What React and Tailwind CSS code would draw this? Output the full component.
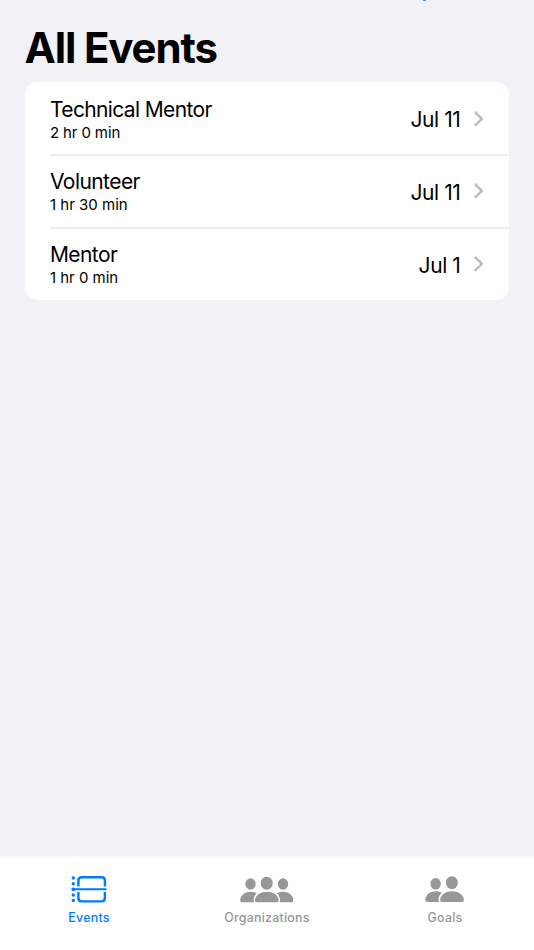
const events = [
  { title: "Technical Mentor", duration: "2 hr 0 min", date: "Jul 11", titleClass: "tracking-[-0.63px]", durationClass: "tracking-[-0.13px]" },
  { title: "Volunteer", duration: "1 hr 30 min", date: "Jul 11", titleClass: "tracking-[-0.56px]", durationClass: "tracking-[0px]" },
  { title: "Mentor", duration: "1 hr 0 min", date: "Jul 1", titleClass: "tracking-[-0.6px]", durationClass: "tracking-[-0.03px]" },
];

function Chevron() {
  return (
    <svg width="12" height="18" viewBox="0 0 12 18" fill="none" className="ml-[12px]">
      <path
        d="M2.4 2.5L8.9 8.8L2.4 15.1"
        stroke="#bdbdc0"
        strokeWidth="2.5"
        strokeLinecap="round"
        strokeLinejoin="round"
      />
    </svg>
  );
}

function EventsIcon() {
  return (
    <svg width="36" height="30" viewBox="0 0 36 30" fill="none" stroke="currentColor">
      <g fill="currentColor" stroke="none">
        <circle cx="2.3" cy="4" r="1.7" />
        <circle cx="2.3" cy="9.7" r="1.7" />
        <circle cx="2.3" cy="15.3" r="1.9" />
        <circle cx="2.3" cy="21" r="1.7" />
        <circle cx="2.3" cy="26.5" r="1.7" />
      </g>
      <path d="M7.4 12.6V6.6Q7.4 3.3 10.7 3.3H30.6Q33.9 3.3 33.9 6.6V12.6" strokeWidth="2.4" />
      <path d="M7.4 18V24.1Q7.4 27.4 10.7 27.4H30.6Q33.9 27.4 33.9 24.1V18" strokeWidth="2.4" />
      <path d="M2.3 15.3H34.7" strokeWidth="1.9" strokeLinecap="round" />
    </svg>
  );
}

function OrganizationsIcon() {
  return (
    <svg width="54" height="30" viewBox="0 0 54 30" fill="currentColor">
      <ellipse cx="10.5" cy="10" rx="5.2" ry="5.8" />
      <ellipse cx="43" cy="10" rx="5.2" ry="5.8" />
      <ellipse cx="26.7" cy="9.2" rx="6" ry="6.5" />
      <path d="M2 28.2Q0.2 28.2 0.2 26.3C0.2 22 4.2 17.8 10.7 17.8C13 17.8 15 18.4 16.7 19.3C14.6 21.2 13.6 23.6 13.6 26C13.6 26.9 13.8 27.6 14.3 28.2Z" />
      <path d="M51.6 28.2Q53.4 28.2 53.4 26.3C53.4 22 49.4 17.8 42.9 17.8C40.6 17.8 38.6 18.4 36.9 19.3C39 21.2 40 23.6 40 26C40 26.9 39.8 27.6 39.3 28.2Z" />
      <path d="M17 28.2Q14.9 28.2 14.9 26.3C14.9 22.4 19.2 17.7 26.8 17.7C34.4 17.7 38.7 22.4 38.7 26.3Q38.7 28.2 36.6 28.2Z" />
    </svg>
  );
}

function GoalsIcon() {
  return (
    <svg width="40" height="30" viewBox="0 0 40 30" fill="currentColor">
      <ellipse cx="10.6" cy="9.8" rx="5.2" ry="5.8" />
      <ellipse cx="26.9" cy="8.7" rx="6" ry="6.5" />
      <path d="M2.1 28Q0.3 28 0.3 26.1C0.3 21.8 4.2 17.2 10.7 17.2C13.1 17.2 15.1 17.8 16.8 18.7C14.6 20.7 13.5 23.3 13.5 25.8C13.5 26.7 13.7 27.4 14.2 28Z" />
      <path d="M17.2 28Q15.1 28 15.1 26.1C15.1 22 19.4 17.2 27 17.2C34.6 17.2 38.9 22 38.9 26.1Q38.9 28 36.8 28Z" />
    </svg>
  );
}

function Tab({ icon, label, active }) {
  return (
    <button
      className={
        active
          ? "flex flex-1 flex-col items-center pt-[17px] text-[#007aff]"
          : "flex flex-1 flex-col items-center pt-[17px] text-[#979797]"
      }
    >
      {icon}
      <span className="mt-[6px] text-[12.4px] leading-[16px] font-medium tracking-[0.24px]">
        {label}
      </span>
    </button>
  );
}

export default function App() {
  return (
    <div className="relative flex h-[950px] w-[534px] flex-col overflow-hidden bg-[#f2f1f6] font-['Inter','Liberation_Sans',sans-serif] text-black">
      {/* bottom tip of the add button, scrolled under the top edge */}
      <span className="absolute top-0 left-[423px] h-px w-[3px] bg-[#3d94fb]" />

      <main className="flex-1 px-[25px] pt-[23px]">
        <h1 className="-ml-[0.5px] text-[42px] leading-[50px] font-bold tracking-[-1.15px]">All Events</h1>

        <ul className="mt-[9.4px] mr-[0.5px] h-[218px] overflow-hidden rounded-[12.5px] bg-white pl-[25px]">
          {events.map((event, i) => (
            <li
              key={i}
              className={
                i > 0
                  ? "flex h-[73px] items-center border-t-2 border-[#ededee] pr-[24px]"
                  : "flex h-[71.6px] items-center pt-px pr-[24px]"
              }
            >
              <div className="flex-1 pt-[2px]">
                <p className={`text-[21px] leading-[26px] ${event.titleClass}`}>{event.title}</p>
                <p className={`text-[15px] leading-[20px] ${event.durationClass}`}>{event.duration}</p>
              </div>
              <span className="pt-[3px] text-[21px] leading-[26px] tracking-[-0.4px]">{event.date}</span>
              <Chevron />
            </li>
          ))}
        </ul>
      </main>

      <nav className="flex h-[94px] border-t border-[#f8f8fa] bg-white">
        <Tab icon={<EventsIcon />} label="Events" active />
        <Tab icon={<OrganizationsIcon />} label="Organizations" />
        <Tab icon={<GoalsIcon />} label="Goals" />
      </nav>
    </div>
  );
}
